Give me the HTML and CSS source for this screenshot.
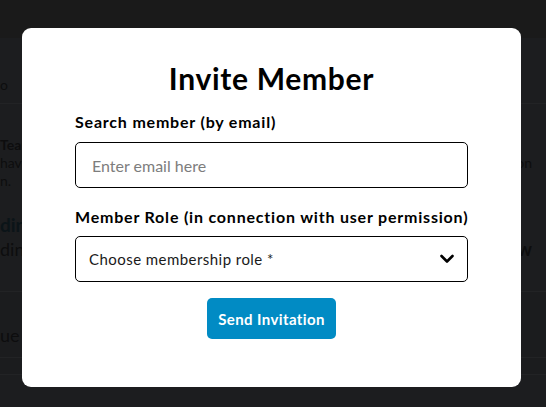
FILE: index.html
```html
<!DOCTYPE html>
<html>
<head>
<meta charset="utf-8">
<link rel="stylesheet" href="styles.css">
</head>
<body>
<div class="page">
  <div class="topbar"></div>
  <div class="row row-head"><span class="ghost">o</span></div>
  <div class="row row-team">
    <div class="ghost bold">Team</div>
    <div class="line"><span class="ghost">have</span><span class="ghost">on</span></div>
    <div class="ghost">n.</div>
  </div>
  <div class="row row-pend">
    <div class="ghost bold teal">ding</div>
    <div class="line"><span class="ghost big">ding</span><span class="ghost big">e: <b>Ow</b></span></div>
  </div>
  <div class="row row-ue"><span class="ghost big">ue</span></div>
  <div class="row row-last"></div>
</div>

<div class="modal">
  <h1 class="title">Invite Member</h1>
  <form class="form">
    <label class="label">Search member (by email)</label>
    <div class="field"><span class="placeholder">Enter email here</span></div>
    <label class="label label-role">Member Role (in connection with user permission)</label>
    <div class="field select">
      <span class="select-text">Choose membership role *</span>
      <svg class="chev" width="14" height="10" viewBox="0 0 14 10"><path d="M1.5 2 L7 7.5 L12.5 2" fill="none" stroke="#000" stroke-width="2.6" stroke-linecap="round" stroke-linejoin="round"/></svg>
    </div>
    <div class="actions"><button type="button" class="btn">Send Invitation</button></div>
  </form>
</div>
</body>
</html>
```
FILE: styles.css
```css
html, body { margin: 0; padding: 0; }
body {
  width: 546px;
  height: 407px;
  overflow: hidden;
  background: #1c1d1f;
  font-family: "Lato", "Liberation Sans", sans-serif;
  position: relative;
}
.page { display: flex; flex-direction: column; }
.topbar { height: 38px; background: #1a1a1a; }
.row { border-bottom: 1px solid #222325; box-sizing: border-box; }
.row-head { height: 66px; padding: 36px 0 0 0; }
.ghost { color: #0d0d0e; font-size: 14px; }
.big { font-size: 18px; }
.bold { font-weight: 700; }
.teal { color: #0b1418; font-size: 19px; }
.row-team { height: 80px; padding: 32px 0 0 0; font-size: 14px; line-height: 18px; border-bottom: none; }
.line { display: flex; justify-content: space-between; padding-right: 14px; }
.row-pend { height: 108px; padding: 28px 0 0 0; line-height: 25px; }
.row-ue { height: 66px; padding: 32px 0 0 0; background: #1b1c1e; }
.row-last { height: 17px; background: #1b1c1e; }

.modal {
  position: absolute;
  left: 22px;
  top: 28px;
  width: 499px;
  height: 359px;
  background: #fff;
  border-radius: 9px;
  box-sizing: border-box;
  padding: 32px 53px 0 53px;
}
.title {
  margin: 0;
  text-align: center;
  font-size: 30px;
  font-weight: 700;
  line-height: 36px;
  letter-spacing: 0.7px;
  color: #000;
}
.form { display: flex; flex-direction: column; margin-top: 16px; }
.label {
  font-size: 16px;
  font-weight: 700;
  color: #000;
  line-height: 20px;
  letter-spacing: 0.8px;
  white-space: nowrap;
}
.label-role { margin-top: 19px; }
.field {
  margin-top: 10px;
  height: 46px;
  border: 1px solid #000;
  border-radius: 5px;
  box-sizing: border-box;
  display: flex;
  align-items: center;
  padding: 0 16px;
}
.placeholder { color: #7d7d7d; font-size: 16px; }
.select { justify-content: space-between; padding: 0 13px 0 13px; margin-top: 9px; }
.select-text { color: #1a1a1a; font-size: 15px; letter-spacing: 0.45px; }
.chev { display: block; }
.actions { display: flex; justify-content: center; margin-top: 16px; }
.btn {
  background: #018bc4;
  color: #fff;
  border: none;
  border-radius: 5px;
  height: 41px;
  padding: 0 11px;
  font-family: "Lato", "Liberation Sans", sans-serif;
  font-size: 15px;
  font-weight: 700;
  letter-spacing: 0.4px;
}
```
